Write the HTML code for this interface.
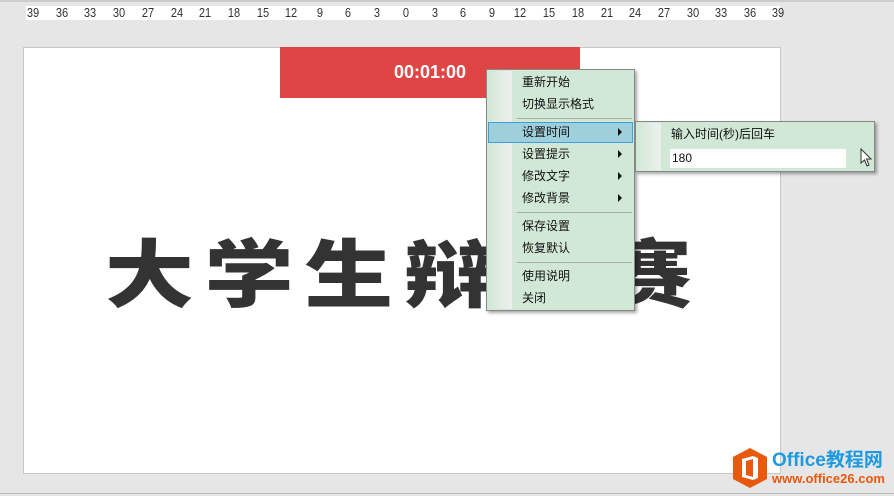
<!DOCTYPE html>
<html><head><meta charset="utf-8"><style>
body{margin:0;width:894px;height:496px;background:#e6e6e6;position:relative;overflow:hidden;font-family:"Liberation Sans","Noto Sans CJK SC",sans-serif}
.abs{position:absolute}
#ruler{left:26px;top:6px;width:754px;height:14px;background:#fff}
#ruler span{position:absolute;top:0;font-size:13px;color:#333;line-height:14px;transform:translateX(-50%) scaleX(.85)}
#slide{left:23px;top:47px;width:756px;height:425px;background:#fff;border:1px solid #c8c8c8}
#red{left:280px;top:47px;width:300px;height:51px;background:#e04546;color:#fff;font-weight:bold;font-size:18px;text-align:center;line-height:51px}
#big{left:105px;top:225px;font-family:"Noto Sans CJK SC",sans-serif;font-weight:900;font-size:74px;color:#333;letter-spacing:9px;line-height:90px;white-space:nowrap;transform-origin:0 0;transform:scaleX(1.2)}
.menu{background:#d2e8d6;border:1px solid #888;box-shadow:2px 2px 3px rgba(0,0,0,.35)}
.gut{position:absolute;left:1px;top:1px;bottom:1px;width:24px;background:linear-gradient(to right,#d2e8d6,#eef0ee)}
.it{position:absolute;left:35px;font-size:12px;color:#111;line-height:16px}
.sep{position:absolute;left:30px;right:2px;height:1px;background:#aaa}
.arr{position:absolute;left:131px;width:0;height:0;border-left:4px solid #111;border-top:4px solid transparent;border-bottom:4px solid transparent}
</style></head><body>
<div class="abs" style="left:0;top:0;width:894px;height:2px;background:#ccc"></div>
<div class="abs" id="ruler">
<span style="left:7px">39</span><span style="left:36px">36</span><span style="left:64px">33</span><span style="left:93px">30</span><span style="left:122px">27</span><span style="left:151px">24</span><span style="left:179px">21</span><span style="left:208px">18</span><span style="left:237px">15</span><span style="left:265px">12</span><span style="left:294px">9</span><span style="left:322px">6</span><span style="left:351px">3</span><span style="left:380px">0</span><span style="left:409px">3</span><span style="left:437px">6</span><span style="left:466px">9</span><span style="left:494px">12</span><span style="left:523px">15</span><span style="left:552px">18</span><span style="left:581px">21</span><span style="left:609px">24</span><span style="left:638px">27</span><span style="left:667px">30</span><span style="left:695px">33</span><span style="left:724px">36</span><span style="left:752px">39</span>
</div>
<div class="abs" id="slide"></div>
<div class="abs" id="red">00:01:00</div>
<div class="abs" id="big">大学生辩论赛</div>
<div class="abs menu" style="left:486px;top:69px;width:147px;height:240px">
<div class="gut"></div>
<div class="it" style="top:4px">重新开始</div>
<div class="it" style="top:26px">切换显示格式</div>
<div class="sep" style="top:48px"></div>
<div class="abs" style="left:1px;top:52px;width:143px;height:19px;background:#a0cfdc;border:1px solid #3b9fe0"></div>
<div class="it" style="top:54px">设置时间</div><div class="arr" style="top:58px"></div>
<div class="it" style="top:76px">设置提示</div><div class="arr" style="top:80px"></div>
<div class="it" style="top:98px">修改文字</div><div class="arr" style="top:102px"></div>
<div class="it" style="top:120px">修改背景</div><div class="arr" style="top:124px"></div>
<div class="sep" style="top:142px"></div>
<div class="it" style="top:148px">保存设置</div>
<div class="it" style="top:170px">恢复默认</div>
<div class="sep" style="top:192px"></div>
<div class="it" style="top:198px">使用说明</div>
<div class="it" style="top:220px">关闭</div>
</div>
<div class="abs menu" style="left:635px;top:121px;width:238px;height:49px">
<div class="gut"></div>
<div class="it" style="top:4px">输入时间(秒)后回车</div>
<div class="abs" style="left:34px;top:27px;width:176px;height:19px;background:#fff;font-size:12px;line-height:19px;text-indent:2px;color:#111">180</div>
<svg class="abs" style="left:224px;top:26px" width="14" height="20" viewBox="0 0 14 20"><path d="M1 1 L1 15 L4.5 12 L7 18 L9 17 L6.5 11 L11 11 Z" fill="#fff" stroke="#333" stroke-width="1"/></svg>
</div>
<svg class="abs" style="left:731px;top:447px" width="38" height="42" viewBox="0 0 38 42"><path d="M19 1 L36 10 L36 32 L19 41 L2 32 L2 10 Z" fill="#e8590c"/><path d="M11 12 L22 9 L27 11 L27 31 L22 33 L11 30 Z" fill="#fff"/><path d="M15 14 L22 12 L22 30 L15 28 Z" fill="#e8590c"/></svg>
<div class="abs" style="left:772px;top:450px;font-size:19px;font-weight:bold;color:#1e9be0;line-height:22px;white-space:nowrap">Office教程网</div>
<div class="abs" style="left:772px;top:472px;font-size:13px;font-weight:bold;color:#e8590c;line-height:14px;white-space:nowrap">www.office26.com</div>
<div class="abs" style="left:0;top:493px;width:894px;height:1px;background:#bbb"></div>
</body></html>
